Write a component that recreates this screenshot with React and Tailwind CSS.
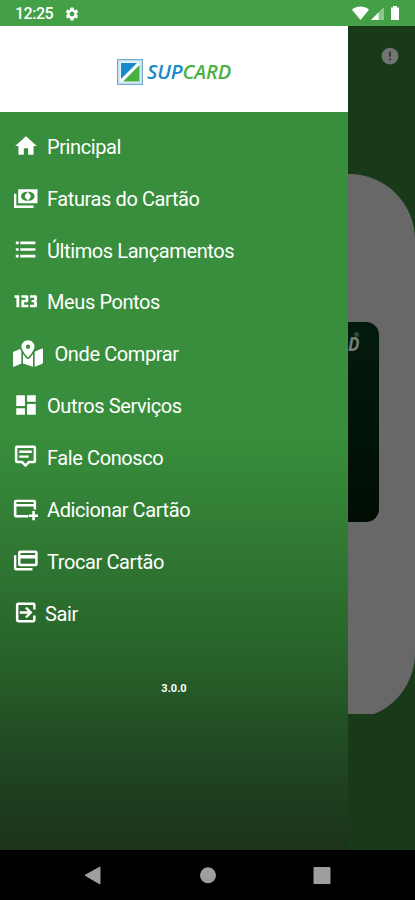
import React from "react";
import { MdHome, MdDashboard, MdSettings, MdError } from "react-icons/md";
import { FaMapMarkedAlt } from "react-icons/fa";

function Glyph({ d, className = "w-[25px] h-[25px]" }) {
  return (
    <svg viewBox="0 0 24 24" fill="currentColor" className={className}>
      <path d={d} fillRule="evenodd" />
    </svg>
  );
}

const cash =
  "M5 4h18.500v13.500H5zM14.200 6.400c-4.200 0-6.500 1.900-6.500 4.400s2.300 4.400 6.500 4.400 6.500-1.900 6.500-4.400-2.300-4.400-6.500-4.400zM14.200 6.400l1.200 1.700a3 3 0 0 1 0 5.400l-1.200 1.700-1.200-1.700a3 3 0 0 1 0-5.400zM1 8.500h2.200v11.200h16.500V22H1z";
const list =
  "M2.700 4.300h2.800v2.600H2.700zM7 4.300h14.500v2.600H7zM2.700 10.700h2.800v2.600H2.700zM7 10.700h14.500v2.600H7zM2.700 17.100h2.800v2.600H2.700zM7 17.100h14.500v2.600H7z";
const numbers =
  "M1.500 6H6V17.500H3.300V8.600H1.500zM8 6h5.500a1.200 1.200 0 0 1 1.200 1.200v4.300a1.200 1.200 0 0 1-1.200 1.200h-2.800v2.300h4v2.500H8v-5.900a1.200 1.200 0 0 1 1.200-1.200H12V8.500H8zM16.300 6h5.500A1.200 1.200 0 0 1 23 7.200v3.600l-.8.900.8.900v3.700a1.200 1.200 0 0 1-1.200 1.200h-5.500V15h4v-2.200h-2.500v-2.200h2.500V8.500h-4z";
const comment =
  "M4 1.500h16a2.200 2.200 0 0 1 2.200 2.200v12.500a2.200 2.200 0 0 1-2.200 2.200h-4.200L12 22.300l-3.800-3.900H4a2.200 2.200 0 0 1-2.200-2.200V3.700A2.200 2.200 0 0 1 4 1.500zM4.200 3.900V16h5l2.800 2.900 2.800-2.900h5V3.900zM6 6.300h12v2.300H6zM6 11h9v2.300H6z";
const cardPlus =
  "M3 3.500h17a2.200 2.200 0 0 1 2.200 2.200V13h-2.400v-3H3.300v8.200h11.500v2.400H3a2.200 2.200 0 0 1-2.200-2.200V5.700A2.200 2.200 0 0 1 3 3.500zM3.300 5.800v1.800h16.500V5.800zM18.500 14.500h2.500v3.200h3.200v2.400H21v3.200h-2.500v-3.200h-3.200v-2.400h3.200z";
const cardMultiple =
  "M7 2.500h14.500A2.200 2.200 0 0 1 23.700 4.700v10.600a2.200 2.200 0 0 1-2.200 2.200H7a2.200 2.200 0 0 1-2.200-2.200V4.700A2.200 2.200 0 0 1 7 2.500zM7.200 4.800v2h14.100v-2zM7.200 10v5.200h14.100V10zM.9 7h2.300v12.300h15.500v2.300H3.100A2.200 2.200 0 0 1 .9 19.400z";
const exit =
  "M5 2.500h14.500a2.200 2.200 0 0 1 2.200 2.200v4.500h-2.400V4.900H5.200v14.200h14.100v-4.300h2.400v4.500a2.200 2.200 0 0 1-2.200 2.200H5a2.200 2.200 0 0 1-2.200-2.200V4.700A2.200 2.200 0 0 1 5 2.500zM6.500 10.800h7.800l-2.700-2.700 1.600-1.600 5.500 5.500-5.500 5.500-1.600-1.600 2.700-2.700H6.500z";

const items = [
  { label: "Principal", icon: <MdHome className="h-[26px] w-[26px]" /> },
  { label: "Faturas do Cartão", icon: <Glyph d={cash} /> },
  { label: "Últimos Lançamentos", icon: <Glyph d={list} /> },
  { label: "Meus Pontos", icon: <Glyph d={numbers} /> },
  { label: "Onde Comprar", icon: <FaMapMarkedAlt className="h-[27px] w-[30px] shrink-0" />, slot: "flex w-[41.500px]" },
  { label: "Outros Serviços", icon: <MdDashboard className="h-[26px] w-[26px]" /> },
  { label: "Fale Conosco", icon: <Glyph d={comment} /> },
  { label: "Adicionar Cartão", icon: <Glyph d={cardPlus} /> },
  { label: "Trocar Cartão", icon: <Glyph d={cardMultiple} /> },
  { label: "Sair", icon: <Glyph d={exit} />, slot: "flex w-[32px]" },
];

function StatusBar() {
  return (
    <header className="flex h-[26px] items-center bg-[#43a047] pl-[15px] pr-[14px] pt-px text-white">
      <span className="pt-px text-[16px] font-medium leading-none tracking-[-0.5px]">12:25</span>
      <MdSettings className="ml-[11px] h-4 w-4" />
      <svg className="ml-auto" width="50" height="16" viewBox="0 0 50 16">
        <path d="M1 3.700C6-.7 13-.7 18 3.700L9.500 14z" fill="#fff" />
        <path d="M33 1v13H20z" fill="#fff" fillOpacity=".4" />
        <path d="M27.500 6.500V14H20z" fill="#fff" />
        <path d="M42 0h4v1.500h2V14h-8V1.500h2z" fill="#fff" />
      </svg>
    </header>
  );
}

function Logo() {
  return (
    <div className="flex h-[86px] items-center justify-center bg-white pt-[6px]">
      <svg width="26" height="26" viewBox="0 0 26 26">
        <rect x=".6" y=".6" width="24.800" height="24.800" fill="#d5e8f3" stroke="#69a8cd" strokeWidth="1.100" />
        <rect x="3.500" y="3.500" width="19" height="19" fill="#fff" />
        <path d="M4 4h16L4 20z" fill="#168acb" />
        <path d="M22.500 6v16.500H6z" fill="#49b044" />
      </svg>
      <span className="ml-[4px] font-['Open_Sans',sans-serif] text-[20px] font-semibold italic leading-none tracking-[-0.150px] text-[#168acb]">
        SUP<span className="text-[#49b044]">CARD</span>
      </span>
    </div>
  );
}

function Drawer() {
  return (
    <aside className="flex w-[348px] shrink-0 flex-col bg-[linear-gradient(to_bottom,#388e3c_0px,#388e3c_410px,#29662b_615px,#204521_740px,#1c331b_824px)]">
      <Logo />
      <nav className="flex flex-col pt-[8px] text-white">
        {items.map((item) => (
          <div key={item.label} className="flex h-[51.850px] items-center pl-[13px]">
            <span className={item.slot || "flex w-[34px]"}>{item.icon}</span>
            <span className="whitespace-nowrap pt-[2px] text-[20px] leading-none tracking-[-0.400px]">{item.label}</span>
          </div>
        ))}
      </nav>
      <p className="pt-[45px] text-center text-[11px] font-bold leading-none text-white">3.0.0</p>
    </aside>
  );
}

function Backdrop() {
  return (
    <section className="flex min-w-0 flex-1 flex-col overflow-hidden bg-[#183a19]">
      <div className="flex h-[148px] justify-end pr-[15px] pt-[20px]">
        <MdError className="h-[20px] w-[20px] text-[#747474]" />
      </div>
      <div className="h-[540px] overflow-hidden">
        <div className="h-[545px] rounded-br-[66px] rounded-tr-[66px] bg-[#686868] pt-[148px]">
          <div className="flex h-[200px] w-[31px] items-start rounded-r-[13px] bg-linear-to-b from-[#021b0e] to-[#010d03] pt-[12px]">
            <span className="origin-left scale-x-[.85] font-['Open_Sans',sans-serif] text-[20px] font-bold italic leading-none text-[#747c78]">D</span>
            <span className="-ml-[8px] -mt-[2px] h-[5px] w-[5px] shrink-0 rounded-full bg-[#35443c]" />
          </div>
        </div>
      </div>
    </section>
  );
}

export default function App() {
  return (
    <div className="flex h-[900px] w-[415px] flex-col overflow-hidden bg-black font-[Roboto,sans-serif]">
      <StatusBar />
      <main className="flex h-[824px] shrink-0">
        <Drawer />
        <Backdrop />
      </main>
      <footer className="flex h-[50px] items-center text-[#9e9e9e]">
        <svg width="415" height="50" viewBox="0 0 415 50" fill="currentColor">
          <path d="M85 25.300 100 17v17z" stroke="currentColor" strokeLinejoin="round" />
          <circle cx="208" cy="25.300" r="8" />
          <rect x="313.500" y="17" width="17" height="17" rx="1" />
        </svg>
      </footer>
    </div>
  );
}
